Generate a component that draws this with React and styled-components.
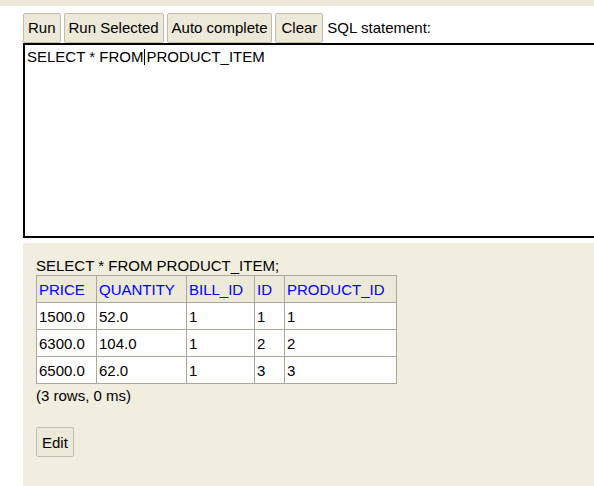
import styled, { createGlobalStyle } from 'styled-components'

const Global = createGlobalStyle`
  html, body {
    margin: 0;
    padding: 0;
    background: #fff;
    overflow: hidden;
  }
  body {
    font-family: "Liberation Sans", Arial, sans-serif;
    font-size: 15px;
    color: #000;
  }
`

const Page = styled.div`
  width: 594px;
  height: 486px;
  display: flex;
  flex-direction: column;
  overflow: hidden;
`

const TopStrip = styled.div`
  height: 6px;
  background: #ebe7d9;
  flex: none;
`

const Editor = styled.div`
  padding: 6px 0 0 23px;
  display: flex;
  flex-direction: column;
  flex: none;
`

const Toolbar = styled.div`
  display: flex;
  align-items: center;
  gap: 3px;
  height: 31px;
`

const Button = styled.button`
  height: 30px;
  padding: 0 ${p => p.$pad || 4}px;
  background: #ece9d8;
  border: 1px solid #c2bdaa;
  border-radius: 2px;
  font-family: "Liberation Sans", Arial, sans-serif;
  font-size: 15px;
  color: #000;
  cursor: pointer;
`

const Label = styled.span`
  margin-left: 1px;
`

const SqlBox = styled.div`
  width: 600px;
  height: 187px;
  border: 2px solid #000;
  border-right: none;
  padding: 2px 2px;
  line-height: 20px;
  white-space: pre;
`

const Caret = styled.span`
  display: inline-block;
  width: 1px;
  height: 16px;
  background: #000;
  vertical-align: -3px;
  margin: 0 1px 0 1px;
`

const Results = styled.div`
  flex: 1;
  margin: 5px 0 0 23px;
  background: #f1eedf;
  padding: 14px 0 0 13px;
`

const Statement = styled.div`
  line-height: 18px;
`

const Table = styled.table`
  border-collapse: collapse;
  background: #fff;
`

const Th = styled.th`
  background: #ece9d8;
  color: #0000ff;
  font-weight: normal;
  text-align: left;
  height: 26px;
  padding: 0 2px;
  border: 1px solid #aca899;
`

const Td = styled.td`
  height: 26px;
  padding: 0 2px;
  border: 1px solid #aca899;
  width: ${p => p.$w}px;
`

const Info = styled.div`
  margin-top: 2px;
  line-height: 20px;
`

const EditButton = styled(Button)`
  margin-top: 21px;
`

const columns = [
  { name: 'PRICE', w: 55 },
  { name: 'QUANTITY', w: 85 },
  { name: 'BILL_ID', w: 63 },
  { name: 'ID', w: 25 },
  { name: 'PRODUCT_ID', w: 107 },
]

const rows = [
  ['1500.0', '52.0', '1', '1', '1'],
  ['6300.0', '104.0', '1', '2', '2'],
  ['6500.0', '62.0', '1', '3', '3'],
]

export default function App() {
  return (
    <Page>
      <Global />
      <TopStrip />
      <Editor>
        <Toolbar>
          <Button $pad={4}>Run</Button>
          <Button $pad={4}>Run Selected</Button>
          <Button $pad={4}>Auto complete</Button>
          <Button $pad={5}>Clear</Button>
          <Label>SQL statement:</Label>
        </Toolbar>
        <SqlBox>
          SELECT * FROM<Caret />PRODUCT_ITEM
        </SqlBox>
      </Editor>
      <Results>
        <Statement>SELECT * FROM PRODUCT_ITEM;</Statement>
        <Table>
          <thead>
            <tr>
              {columns.map(c => (
                <Th key={c.name}>{c.name}</Th>
              ))}
            </tr>
          </thead>
          <tbody>
            {rows.map((r, i) => (
              <tr key={i}>
                {r.map((v, j) => (
                  <Td key={j} $w={columns[j].w}>{v}</Td>
                ))}
              </tr>
            ))}
          </tbody>
        </Table>
        <Info>(3 rows, 0 ms)</Info>
        <EditButton $pad={5}>Edit</EditButton>
      </Results>
    </Page>
  )
}
